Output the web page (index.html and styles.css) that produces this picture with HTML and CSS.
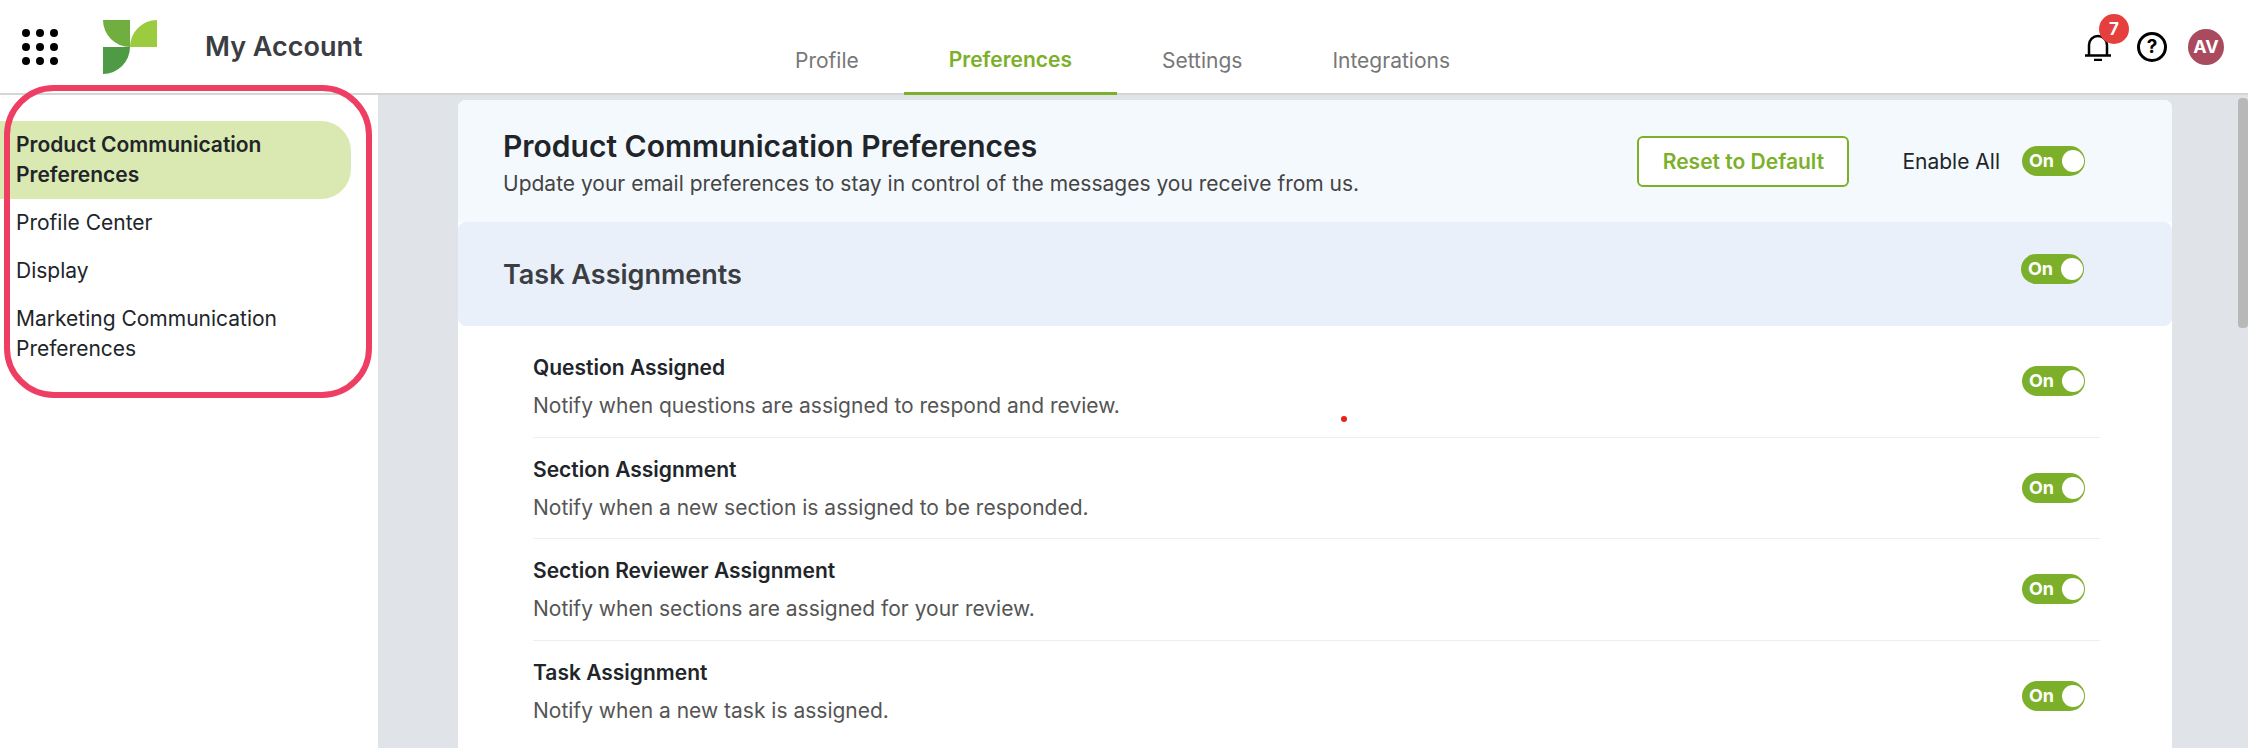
FILE: index.html
```html
<!DOCTYPE html>
<html lang="en">
<head>
<meta charset="utf-8">
<title>My Account</title>
<link rel="stylesheet" href="styles.css">
</head>
<body>
<header class="topbar">
  <div class="brand">
    <svg class="apps" viewBox="0 0 36 36" aria-hidden="true">
      <circle cx="4" cy="4" r="4"/><circle cx="18" cy="4" r="4"/><circle cx="32" cy="4" r="4"/>
      <circle cx="4" cy="18" r="4"/><circle cx="18" cy="18" r="4"/><circle cx="32" cy="18" r="4"/>
      <circle cx="4" cy="32" r="4"/><circle cx="18" cy="32" r="4"/><circle cx="32" cy="32" r="4"/>
    </svg>
    <svg class="logo" viewBox="0 0 54 54" aria-hidden="true">
      <path fill="#70ae3f" d="M0 0H27V27A27 27 0 0 1 0 0Z"/>
      <path fill="#9bcb3f" d="M27 27A27 27 0 0 1 54 0V27Z"/>
      <path fill="#4f9a45" d="M0 27H27A27 27 0 0 1 0 54Z"/>
    </svg>
    <span class="app-title">My Account</span>
  </div>
  <nav class="tabs">
    <a class="tab">Profile</a>
    <a class="tab active">Preferences</a>
    <a class="tab">Settings</a>
    <a class="tab">Integrations</a>
  </nav>
  <div class="tools">
    <span class="bell">
      <svg viewBox="0 0 26 28" aria-hidden="true">
        <path d="M4 22V12A9 9 0 0 1 22 12V22M0 22.500H26M9 27H17"/>
      </svg>
      <span class="badge">7</span>
    </span>
    <span class="help">?</span>
    <span class="avatar">AV</span>
  </div>
</header>
<div class="layout">
  <aside class="sidebar">
    <ul class="side-list">
      <li class="side-item current">Product Communication Preferences</li>
      <li class="side-item">Profile Center</li>
      <li class="side-item">Display</li>
      <li class="side-item">Marketing Communication Preferences</li>
    </ul>
    <div class="highlight"></div>
  </aside>
  <main class="content">
    <section class="card">
      <div class="card-head">
        <div class="head-text">
          <h1>Product Communication Preferences</h1>
          <p>Update your email preferences to stay in control of the messages you receive from us.</p>
        </div>
        <button class="reset">Reset to Default</button>
        <span class="enable">Enable All</span>
        <span class="toggle">On</span>
      </div>
      <div class="group-head">
        <h2>Task Assignments</h2>
        <span class="toggle">On</span>
      </div>
      <div class="rows">
        <div class="row">
          <div class="row-text"><h3>Question Assigned</h3><p>Notify when questions are assigned to respond and review.</p></div>
          <span class="toggle">On</span>
        </div>
        <div class="row">
          <div class="row-text"><h3>Section Assignment</h3><p>Notify when a new section is assigned to be responded.</p></div>
          <span class="toggle">On</span>
        </div>
        <div class="row">
          <div class="row-text"><h3>Section Reviewer Assignment</h3><p>Notify when sections are assigned for your review.</p></div>
          <span class="toggle">On</span>
        </div>
        <div class="row">
          <div class="row-text"><h3>Task Assignment</h3><p>Notify when a new task is assigned.</p></div>
          <span class="toggle">On</span>
        </div>
      </div>
    </section>
    <div class="scroll-thumb"></div>
    <div class="red-dot"></div>
  </main>
</div>
</body>
</html>
```
FILE: styles.css
```css
* { box-sizing: border-box; }
html, body { height: 100%; }
body {
  margin: 0;
  overflow: hidden;
  background: #fff;
  font-family: Inter, "Liberation Sans", sans-serif;
  color: #212529;
}
h1, h2, h3, p, ul { margin: 0; padding: 0; }

.topbar {
  height: 95px;
  display: flex;
  background: #fff;
  border-bottom: 2px solid #d5d6d8;
  position: relative;
}
.brand { width: 750px; display: flex; align-items: center; padding-left: 22px; }
.apps { width: 36px; height: 36px; fill: #000; margin-right: 45px; }
.logo { width: 54px; height: 54px; margin-right: 48px; }
.app-title { font-size: 27px; font-weight: 600; color: #3a3d42; }
.tabs { display: flex; height: 95px; }
.tab {
  padding: 44px 45px 0;
  font-size: 21px;
  line-height: 34px;
  color: #777;
  height: 95px;
}
.tab.active {
  color: #7cb02a;
  font-weight: 600;
  padding-top: 43px;
  border-bottom: 3px solid #7cb02a;
}
.tools { margin-left: auto; display: flex; align-items: center; padding-right: 24px; }
.bell { position: relative; width: 26px; height: 28px; margin-right: 26px; }
.bell svg { width: 26px; height: 28px; fill: none; stroke: #000; stroke-width: 2.500; display: block; }
.badge {
  position: absolute;
  left: 14px;
  top: -19px;
  width: 30px;
  height: 30px;
  border-radius: 50%;
  background: #e5403d;
  color: #fff;
  font-size: 17px;
  font-weight: 700;
  text-align: center;
  line-height: 30px;
}
.help {
  width: 30px;
  height: 30px;
  border: 3px solid #000;
  border-radius: 50%;
  font-size: 19px;
  font-weight: 700;
  text-align: center;
  line-height: 24px;
  color: #000;
  margin-right: 21px;
}
.avatar {
  width: 36px;
  height: 36px;
  border-radius: 50%;
  background: #a94a5f;
  color: #fff;
  font-size: 18px;
  font-weight: 700;
  text-align: center;
  line-height: 36px;
}

.layout { display: flex; height: 653px; }
.sidebar { width: 378px; flex: none; background: #fff; padding-top: 26px; position: relative; }
.side-item {
  list-style: none;
  font-size: 21px;
  line-height: 30px;
  padding: 9px 16px;
  width: 351px;
  color: #212529;
}
.side-item.current {
  background: #dae9b1;
  font-weight: 600;
  border-radius: 0 30px 30px 0;
}
.highlight {
  position: absolute;
  left: 4px;
  top: -10px;
  width: 368px;
  height: 313px;
  border: 6px solid #ee3e63;
  border-radius: 50px;
}

.content { flex: 1; background: #e0e3e8; padding: 5px 76px 0 80px; position: relative; overflow: hidden; }
.card { background: #fff; border-radius: 8px 8px 0 0; }
.card-head {
  height: 122px;
  background: #f4f9fe;
  border-radius: 8px 8px 0 0;
  display: flex;
  align-items: center;
  padding: 0 87px 0 45px;
}
.head-text { flex: 1; padding-top: 4px; }
h1 { font-size: 30px; font-weight: 600; line-height: 36px; color: #212529; }
.head-text p { font-size: 21px; line-height: 30px; color: #444; margin-top: 5px; }
.reset {
  width: 212px;
  height: 51px;
  background: #fff;
  border: 2px solid #7cb02a;
  border-radius: 6px;
  color: #7cb02a;
  font: 600 21px Inter, "Liberation Sans", sans-serif;
}
.enable { font-size: 21px; color: #212529; margin: 0 22px 0 53px; }

.toggle {
  width: 63px;
  height: 30px;
  border-radius: 15px;
  background: #7cb02a;
  color: #fff;
  font-size: 18px;
  font-weight: 700;
  line-height: 30px;
  padding-left: 7px;
  position: relative;
  flex: none;
}
.toggle::after {
  content: "";
  position: absolute;
  right: 1px;
  top: 4px;
  width: 22px;
  height: 22px;
  border-radius: 50%;
  background: #fff;
}

.group-head {
  height: 104px;
  background: #e9f0fa;
  border-radius: 8px;
  display: flex;
  align-items: center;
  justify-content: space-between;
  padding: 0 88px 0 45px;
}
.group-head .toggle { margin-bottom: 10px; }
h2 { font-size: 27px; font-weight: 600; color: #3a3d42; }
.rows { padding: 0 72px 40px 75px; }
.row {
  display: flex;
  align-items: center;
  justify-content: space-between;
  height: 101.500px;
  border-bottom: 1px solid #eee;
  padding-right: 15px;
}
.row-text { padding-top: 2px; }
.row:first-child { height: 111.500px; }
.row:first-child .row-text { padding-top: 12px; }
.row:last-child { border-bottom: 0; }
.row:last-child .toggle { margin-top: 10px; }
h3 { font-size: 21px; font-weight: 600; line-height: 30px; color: #212529; }
.row p { font-size: 21px; line-height: 30px; color: #555; margin-top: 8px; }

.scroll-thumb {
  position: absolute;
  right: 0;
  top: 3px;
  width: 10px;
  height: 230px;
  background: #b8b8b8;
  border-radius: 4px;
}
.red-dot {
  position: absolute;
  left: 963px;
  top: 321px;
  width: 6px;
  height: 6px;
  border-radius: 50%;
  background: #e8201c;
}
```
